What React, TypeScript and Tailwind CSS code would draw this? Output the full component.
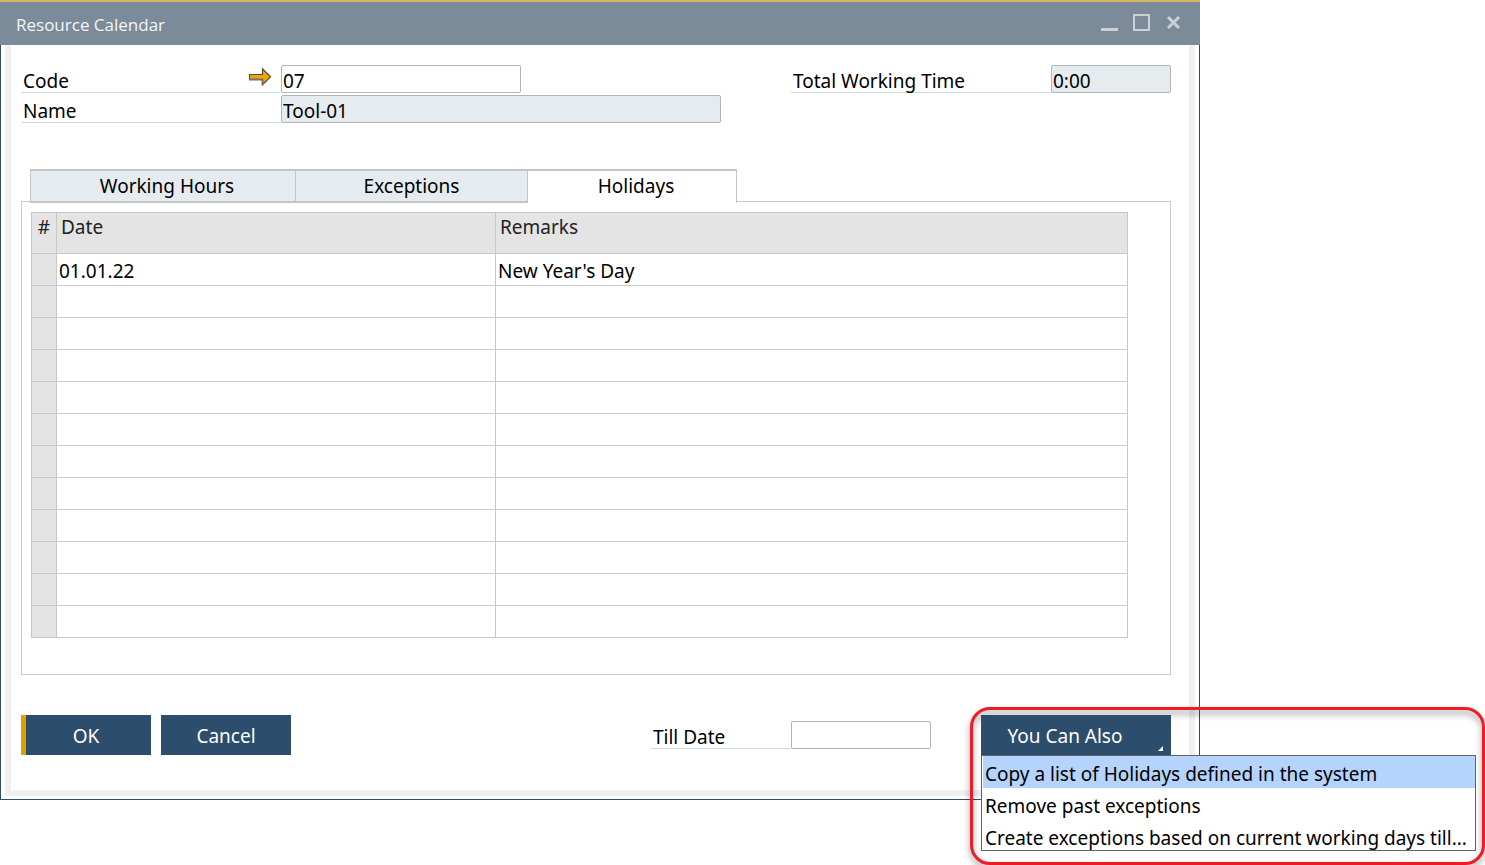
import React, { useState } from "react";

const tabs = [
  { id: "hours", label: "Working Hours", width: "w-[265px]", align: "pl-2" },
  { id: "exceptions", label: "Exceptions", width: "w-[232px]", align: "" },
  { id: "holidays", label: "Holidays", width: "w-[210px]", align: "pl-2" },
];

const holidays = [{ date: "01.01.22", remarks: "New Year's Day" }];
const ROW_COUNT = 12;

const actions = [
  "Copy a list of Holidays defined in the system",
  "Remove past exceptions",
  "Create exceptions based on current working days till...",
];

type FieldProps = {
  id: string;
  label: string;
  value?: string;
  readOnly?: boolean;
  labelWidth: string;
  inputWidth: string;
  children?: React.ReactNode;
};

function Field({ id, label, value = "", readOnly, labelWidth, inputWidth, children }: FieldProps) {
  return (
    <div className="flex h-7">
      <div className={`flex shrink-0 items-start justify-between border-b border-[#d3dade] pl-0.5 pr-2 ${labelWidth}`}>
        <label htmlFor={id} className="pt-0.5 leading-7 whitespace-nowrap">
          {label}
        </label>
        {children}
      </div>
      <input
        id={id}
        type="text"
        defaultValue={value}
        readOnly={readOnly}
        className={`h-7 rounded-xs border border-[#b0b5b8] px-px pt-1 outline-none ${inputWidth} ${readOnly ? "bg-[#e6ebef]" : "bg-white"}`}
      />
    </div>
  );
}

function LinkArrow() {
  return (
    <svg width="24" height="20" viewBox="0 0 24 20" className="mt-0.5 mr-px" aria-hidden="true">
      <path d="M1.5 7.5H14.5V1.8L22.6 9.8L14.5 17.8V12.5H1.5Z" fill="#f0a800" stroke="#5d4a3c" strokeWidth="1.2" />
      <path d="M1 12.5H14.5V17.5" fill="none" stroke="#77716f" strokeWidth="1.8" />
    </svg>
  );
}

function TitleBar() {
  return (
    <header className="flex h-[45px] items-center justify-between border-t-2 border-[#d9b566] bg-[#7b8b9a] pl-4 pr-[17px]">
      <h1 className="pt-0.5 font-['Open_Sans',sans-serif] text-[17px] leading-6 text-[#f4f6f7]">Resource Calendar</h1>
      <div className="flex gap-3.5 pb-0.5">
        <button type="button" aria-label="Minimize">
          <svg width="18" height="18" viewBox="0 0 18 18">
            <path d="M0 15.5H17" stroke="#cbd1d7" strokeWidth="3" />
          </svg>
        </button>
        <button type="button" aria-label="Maximize">
          <svg width="18" height="18" viewBox="0 0 18 18">
            <rect x="1" y="1" width="15" height="15" fill="none" stroke="#cbd1d7" strokeWidth="2" />
          </svg>
        </button>
        <button type="button" aria-label="Close">
          <svg width="18" height="18" viewBox="0 0 18 18">
            <path d="M3 3L14 14M14 3L3 14" stroke="#cbd1d7" strokeWidth="3" />
          </svg>
        </button>
      </div>
    </header>
  );
}

function HolidayTable() {
  const cell = "border-r border-b border-[#c8c8c8]";
  return (
    <table className="w-full table-fixed border-separate border-spacing-0 border-t border-l border-[#c8c8c8] text-left">
      <colgroup>
        <col className="w-[25px]" />
        <col className="w-[439px]" />
        <col />
      </colgroup>
      <thead>
        <tr className="h-[41px] bg-[#e4e4e4] align-top text-[#222]">
          <th className={`${cell} text-center font-normal`}>#</th>
          <th className={`${cell} px-1 font-normal`}>Date</th>
          <th className={`${cell} px-1 font-normal`}>Remarks</th>
        </tr>
      </thead>
      <tbody>
        {Array.from({ length: ROW_COUNT }, (_, i) => (
          <tr key={i} className="h-8">
            <td className={`${cell} bg-[#e4e4e4]`} />
            <td className={`${cell} px-0.5 pt-0.5`}>{holidays[i]?.date}</td>
            <td className={`${cell} px-0.5 pt-0.5`}>{holidays[i]?.remarks}</td>
          </tr>
        ))}
      </tbody>
    </table>
  );
}

function ActionsMenu() {
  const [active, setActive] = useState(0);
  return (
    <div className="relative w-[190px]">
      <div className="pointer-events-none absolute -top-2 -left-[11px] h-[158px] w-[515px] rounded-[20px] border-3 border-[#ee1c25] drop-shadow-[0_4px_3px_rgba(0,0,0,0.45)]" />
      <button type="button" aria-haspopup="menu" className="relative h-10 w-full bg-[#2c4d6c] pt-0.5 pr-[22px] text-white">
        You Can Also
        <svg width="5" height="5" viewBox="0 0 5 5" className="absolute right-2 bottom-1" aria-hidden="true">
          <path d="M5 0V5H0Z" fill="#fff" />
        </svg>
      </button>
      <ul role="menu" className="absolute top-full left-0 w-[495px] border border-[#5f6266] bg-white pl-px">
        {actions.map((action, i) => (
          <li key={action} role="none">
            <button
              type="button"
              role="menuitem"
              onMouseEnter={() => setActive(i)}
              className={`block w-full pl-0.5 pt-1 text-left leading-7 whitespace-nowrap ${i === active ? "bg-[#b4d4fd]" : "bg-white"} ${i === actions.length - 1 ? "h-[30px]" : "h-8"}`}
            >
              {action}
            </button>
          </li>
        ))}
      </ul>
    </div>
  );
}

export default function App() {
  const [tab, setTab] = useState("holidays");
  return (
    <div className="min-h-screen bg-white">
      <main className="w-full max-w-[1200px] font-['Noto_Sans',sans-serif] text-[19px] leading-7 text-black">
        <TitleBar />
        <div className="border-x border-b border-[#2c4d6c] px-1 pb-[3px]">
          <form
            onSubmit={(e) => e.preventDefault()}
            className="border-x-6 border-b-6 border-[#f0f0f0] pt-5 pr-[18px] pb-[35px] pl-2.5"
          >
            <div className="flex justify-between">
              <div className="flex flex-col gap-0.5">
                <Field id="code" label="Code" value="07" labelWidth="w-[260px]" inputWidth="w-[240px]">
                  <LinkArrow />
                </Field>
                <Field id="name" label="Name" value="Tool-01" readOnly labelWidth="w-[260px]" inputWidth="w-[440px]" />
              </div>
              <Field id="total" label="Total Working Time" value="0:00" readOnly labelWidth="w-[260px]" inputWidth="w-[120px]" />
            </div>

            <div role="tablist" className="relative mt-[46px] ml-[9px] flex">
              {tabs.map((t) => (
                <button
                  key={t.id}
                  type="button"
                  role="tab"
                  aria-selected={t.id === tab}
                  onClick={() => setTab(t.id)}
                  className={`h-[34px] border-t-2 border-l border-[#c4c4c4] last:border-r ${t.width} ${t.align} ${
                    t.id === tab ? "bg-white pb-0.5" : "border-b-2 bg-[#e6ebef]"
                  }`}
                >
                  {t.label}
                </button>
              ))}
            </div>

            <section className="-mt-0.5 border border-[#c8c8c8] pt-2.5 pr-[42px] pb-9 pl-[9px]">
              <HolidayTable />
            </section>

            <div className="mt-10 flex">
              <div className="flex gap-2.5 text-white">
                <button type="submit" className="h-10 w-[130px] border-l-5 border-[#e0a000] bg-[#2c4d6c] pt-0.5 pr-[5px]">
                  OK
                </button>
                <button type="button" className="h-10 w-[130px] bg-[#2c4d6c] pt-0.5">
                  Cancel
                </button>
              </div>
              <div className="mr-[50px] ml-auto pt-1.5">
                <Field id="till" label="Till Date" labelWidth="w-[140px]" inputWidth="w-[140px]" />
              </div>
              <ActionsMenu />
            </div>
          </form>
        </div>
      </main>
    </div>
  );
}
